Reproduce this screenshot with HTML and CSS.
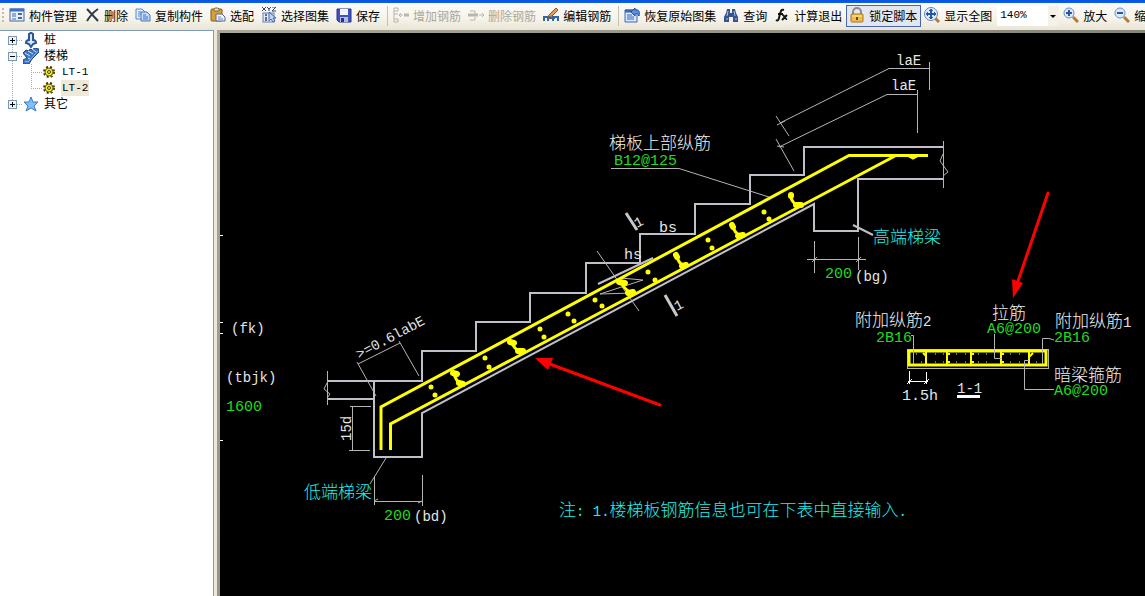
FILE: index.html
```
<!DOCTYPE html>
<html lang="zh-CN">
<head>
  <meta charset="UTF-8" />
  <meta name="viewport" content="width=device-width, initial-scale=1.0"/>
  <title>楼梯 LT-2</title>
  <link rel="stylesheet" href="styles.css">
</head>
<body>
  <div class="title-strip"></div>

  <div class="toolbar" role="toolbar">
    <span class="grip"></span>
    <button class="tool">
      <svg class="icon" viewBox="0 0 16 16"><rect x="1" y="2" width="14" height="12" fill="#e8f0fc" stroke="#47679e"/><path d="M1 3h14" stroke="#3f6fc4" stroke-width="3"/><path d="M3 7h4M3 9h4M3 12h4" stroke="#47679e"/><rect x="9" y="6" width="4" height="2" fill="#47679e"/><rect x="9" y="10" width="4" height="2" fill="#47679e"/></svg>
      构件管理
    </button>
    <button class="tool">
      <svg class="icon" viewBox="0 0 16 16"><path d="M3 2l11 12" stroke="#333a4c" stroke-width="2"/><path d="M14 2Q8 6 3 14" stroke="#333a4c" stroke-width="2" fill="none"/></svg>
      删除
    </button>
    <button class="tool">
      <svg class="icon" viewBox="0 0 16 16"><path d="M1 2h6l3 3v7H1z" fill="#dfebff" stroke="#5f87c5"/><path d="M3 5h3M3 7h4M3 9h2" stroke="#5f87c5"/><path d="M6 5h6l3 3v6H6z" fill="#c5dafa" stroke="#4775bc"/><path d="M8 8h3M8 10h5M8 12h5" stroke="#4775bc"/></svg>
      复制构件
    </button>
    <button class="tool">
      <svg class="icon" viewBox="0 0 16 16"><rect x="1" y="2" width="11" height="12" rx="1" fill="#d9a035" stroke="#7d5c1c"/><path d="M4 4V2l1-1h3l1 1v2z" fill="#eee4b9" stroke="#7d6a3c"/><path d="M6 7h6l3 3v4H6z" fill="#eef4ff" stroke="#5d6980"/><path d="M8 10h3M8 12h5" stroke="#6b88b8"/></svg>
      选配
    </button>
    <button class="tool">
      <svg class="icon" viewBox="0 0 16 16"><path d="M1 0l4 4M5 0L1 4M6 0l2 2 2-2M8 2v2M11 0h4l-4 4h4" stroke="#3b4560" fill="none"/><rect x="2" y="6" width="11" height="9" fill="#e2e9f7" stroke="#6b7fa8"/><path d="M4 8h2M8 8h3M4 11h2M4 13h2" stroke="#526fa8" stroke-width="2"/><path d="M8 5v9l2-2 2 3 2-1-2-3h3z" fill="#bcd4f5" stroke="#4869a3"/></svg>
      选择图集
    </button>
    <button class="tool">
      <svg class="icon" viewBox="0 0 16 16"><path d="M1 2h14v13H3l-2-2z" fill="#4450bb" stroke="#28338c"/><rect x="4" y="2" width="8" height="6" fill="#eef3ff"/><rect x="4" y="10" width="8" height="5" fill="#b4bdd5"/><rect x="5" y="11" width="3" height="4" fill="#28338c"/></svg>
      保存
    </button>
    <span class="separator"></span>
    <button class="tool" disabled>
      <svg class="icon" viewBox="0 0 16 16" fill="none" stroke="#b9b6aa"><path d="M1 1h4v3H1M1 7h4M1 12h4v3H1M1 1v14M6 8h4M8 6L6 8l2 2"/><path d="M11 8h5" stroke-width="3"/></svg>
      增加钢筋
    </button>
    <button class="tool" disabled>
      <svg class="icon" viewBox="0 0 16 16" fill="none" stroke="#b9b6aa"><path d="M2 4h5v3M2 13h5v-3M11 8h5M14 6l2 2-2 2"/><path d="M0 8h10" stroke-width="3"/></svg>
      删除钢筋
    </button>
    <button class="tool">
      <svg class="icon" viewBox="0 0 16 16" fill="none"><path d="M1 14v-4h4v4M4 11h8M10 14v-4h5v4" stroke="#3466a6" stroke-width="2"/><path d="M6 8l7-7 2 2-6 6-4 1z" fill="#e2a05a" stroke="#8b542c"/></svg>
      编辑钢筋
    </button>
    <span class="separator"></span>
    <button class="tool">
      <svg class="icon" viewBox="0 0 16 16"><path d="M1 3h12v12H1z" fill="#d8e7ff" stroke="#3a68b5"/><path d="M1 4h8" stroke="#3a68b5" stroke-width="3"/><path d="M3 8h5M3 10h7M3 12h7" stroke="#3a68b5"/><path d="M7 5l4-4v2c4-1 5 2 4 6-1-2-2-3-4-2v2z" fill="#5b91e4" stroke="#234d9a"/></svg>
      恢复原始图集
    </button>
    <button class="tool">
      <svg class="icon" viewBox="0 0 16 16"><path d="M4 2h3v4h2V2h3l1 4 2 4v5h-5v-5H6v5H1v-5l2-4z" fill="#34558d"/><path d="M5 4L4 9M11 4l1 5M3 12h2M12 12h2" stroke="#a9c8f5"/></svg>
      查询
    </button>
    <button class="tool">
      <svg class="icon" viewBox="0 0 16 16" fill="none" stroke="#111"><path d="M2 13c3 2 3-3 4-6s1-5 4-4M4 7h5" stroke-width="2"/><path d="M8 8c3-1 2 5 5 4M13 8l-5 5" stroke-width="2"/></svg>
      计算退出
    </button>
    <button class="tool pressed" aria-pressed="true">
      <svg class="icon" viewBox="0 0 16 16"><path d="M4 8V5a4 4 0 0 1 8 0v3" fill="none" stroke="#8b8b8b" stroke-width="2"/><rect x="2" y="7" width="12" height="8" rx="1" fill="#f0bd48" stroke="#a87420"/><path d="M3 9h10" stroke="#ffe7a0"/><path d="M8 10v3" stroke="#634413" stroke-width="2"/></svg>
      锁定脚本
    </button>
    <button class="tool">
      <svg class="icon" viewBox="0 0 16 16"><path d="M11 11l4 4" stroke="#b5793a" stroke-width="3"/><circle cx="7" cy="7" r="6.500" fill="#e0eeff" stroke="#6387bb"/><path d="M7 2v10M2 7h10" stroke="#2759a8" stroke-width="2"/><path d="M5 4l2-2 2 2M5 10l2 2 2-2M4 5L2 7l2 2M10 5l2 2-2 2" fill="none" stroke="#2759a8"/></svg>
      显示全图
    </button>
    <span class="zoom-box">
      <select class="zoom-select" aria-label="显示比例"><option>140%</option><option>100%</option></select>
    </span>
    <button class="tool">
      <svg class="icon" viewBox="0 0 16 16"><path d="M10 10l5 5" stroke="#b5793a" stroke-width="3"/><circle cx="6" cy="6" r="5" fill="#dcecff" stroke="#6f91bf"/><path d="M6 3v6M3 6h6" stroke="#2759a8" stroke-width="2"/></svg>
      放大
    </button>
    <button class="tool">
      <svg class="icon" viewBox="0 0 16 16"><path d="M10 10l5 5" stroke="#b5793a" stroke-width="3"/><circle cx="6" cy="6" r="5" fill="#dcecff" stroke="#6f91bf"/><path d="M3 6h6" stroke="#2759a8" stroke-width="2"/></svg>
      缩小
    </button>
  </div>

  <div class="workspace">
    <nav class="sidebar">
      <ul class="tree">
        <li>
          <div class="node">
            <button class="toggle" aria-label="展开"><svg viewBox="0 0 9 9"><path d="M2 4.5h5M4.5 2v5" stroke="#000"/></svg></button>
            <span class="stub"></span>
            <svg class="icon" viewBox="0 0 16 16"><path d="M6 2q2-2 4 0v6q3 0 3 3l-3 1-2 3-2-3-3-1q0-3 3-3z" fill="#d5e6ff" stroke="#2c5793" stroke-width="2"/></svg>
            <span class="name">桩</span>
          </div>
        </li>
        <li>
          <div class="node">
            <button class="toggle" aria-label="折叠"><svg viewBox="0 0 9 9"><path d="M2 4.5h5" stroke="#000"/></svg></button>
            <span class="stub"></span>
            <svg class="icon" viewBox="0 0 16 16"><path d="M0 5l3-3 3 1 1-2 3 1 1-2 5 1v3l-7 7-3 5H0v-4l4-2z" fill="#3f75c4" stroke="#214886"/><path d="M2 5l5 3M5 3l5 3M9 1l4 3M5 10l2 1" stroke="#cfe3ff"/><path d="M2 13l3 1L15 3" fill="none" stroke="#8db8f5"/></svg>
            <span class="name">楼梯</span>
          </div>
          <ul class="children">
            <li class="node">
              <span class="stub"></span>
              <svg class="gear" viewBox="0 0 12 12"><circle cx="6" cy="6" r="5" fill="none" stroke="#484000" stroke-width="2" stroke-dasharray="2 2"/><circle cx="6" cy="6" r="4" fill="#f5e73a" stroke="#6a6000"/><circle cx="6" cy="6" r="1.500" fill="#fff35a" stroke="#484000"/></svg>
              <span class="name latin">LT-1</span>
            </li>
            <li class="node">
              <span class="stub"></span>
              <svg class="gear" viewBox="0 0 12 12"><circle cx="6" cy="6" r="5" fill="none" stroke="#484000" stroke-width="2" stroke-dasharray="2 2"/><circle cx="6" cy="6" r="4" fill="#f5e73a" stroke="#6a6000"/><circle cx="6" cy="6" r="1.500" fill="#fff35a" stroke="#484000"/></svg>
              <span class="name latin selected">LT-2</span>
            </li>
          </ul>
        </li>
        <li>
          <div class="node">
            <button class="toggle" aria-label="展开"><svg viewBox="0 0 9 9"><path d="M2 4.5h5M4.5 2v5" stroke="#000"/></svg></button>
            <span class="stub"></span>
            <svg class="icon" viewBox="0 0 16 16"><path d="M8 1l2 5h5l-4 4 2 5-5-3-5 3 2-5-4-4h5z" fill="#7fc0f7" stroke="#3a77c8"/></svg>
            <span class="name">其它</span>
          </div>
        </li>
      </ul>
    </nav>

    <main class="canvas">
      <svg class="drawing" viewBox="220 33 925 563" preserveAspectRatio="xMinYMin meet">
        <!-- concrete outline -->
        <g class="outline">
          <path d="M943 147H804V175H750V204H695V234H640V263H586V293H530V322H476V351H422V381H327"/>
          <path d="M327 399H374M374 381V457H422V413L814 204V231H858V179H943"/>
          <path d="M598 284L653 258"/>
          <path d="M853 225L873 235"/>
        </g>

        <!-- dimension and leader lines -->
        <g class="thin">
          <path d="M327.5 371V405M327 383L324 389L330 394L327 398"/>
          <path d="M943.5 141V188M943 154L940 161L948 172L943 176"/>
          <path d="M780 123L889 68.5H929M929.5 62V90M776 116L789 136M777 125L785 121"/>
          <path d="M779 147L887 94.5H918M917.5 90V133M776 139L794 171M777 146L784 147"/>
          <path d="M611 168.5H679L772 198"/>
          <path d="M597 251L639 311M620 278L643 280L600 294L632 293"/>
          <path d="M807 259.5H866M814.5 241V273M858.5 237V270M812 262L817 257M856 262L861 257"/>
          <path d="M374 501.5H422M374.5 476V505M422.5 475V506M374 501l4-2M422 501l-4 2"/>
          <path d="M386 458L370 484"/>
          <path d="M352.5 406V450M350 406.5H371M349 450.5H370"/>
          <path d="M358 364L400 343M357 362L376 396M399 341L419 376"/>
        </g>
        <path class="edge-mark" d="M220 235.5h3M220 322.5h3M220 333.5h3M220 440.5h3"/>
        <path class="cut" d="M626 213L637 230M665 295L677 316"/>

        <!-- rebar -->
        <g class="rebar">
          <path d="M381 450V407L849 155.5H928"/>
          <path d="M390.5 450V424L895 156M909 156l4 2 4-2"/>
        </g>
        <g class="rebar">
          <path d="M454 373q1 8 9 12M511 341q2 8 12 12M621 281q2 8 12 13M677 255q0 8 9 12M733 225q0 8 10 12M791 196q0 8 10 10"/>
        </g>
        <g class="knot">
          <path d="M453 373l4 1M510 342l4 1M619 282l6 1M676 255l1 2M732 225l1 2M791 195v1"/>
          <path d="M459 383l4 1M518 351l5 0M628 293l5-1M682 266l4-1M738 236l5-1M796 205l5 0"/>
        </g>
        <path class="dots" d="M431 387h0M435 395h0M485 358h0M489 367h0M540 329h0M544 337h0M568 314h0M574 321h0M595 300h0M602 306h0M648 272h0M655 280h0M708 240h0M712 248h0M764 212h0M769 219h0"/>

        <!-- section 1-1 -->
        <rect class="thin" x="907.5" y="349.5" width="141" height="19"/>
        <rect class="section" x="909" y="351" width="137" height="14"/>
        <path class="section-bar" d="M926 351v14M947 351v14M971 351v14M1001 351v14M1029 351v14M923 353l3 3M946 354h4M946 362h4M970 354h4M970 362h4M1000 354h4M1000 362h4M1029 357l4-4"/>
        <path class="points" d="M916 354h1M921 362h1M935 354h1M935 362h1M943 354h1M943 362h1M956 354h1M956 362h1M965 354h1M965 362h1M978 354h1M978 362h1M986 354h1M986 362h1M1010 354h1M1010 362h1M1019 354h1M1019 362h1M1036 362h1"/>
        <path class="thin" d="M911 335.5h2.5V364M994.5 334V358.5H1002M1042.5 364V338.5H1049L1054 340M1029 360.5H1024.5V389.5H1054"/>
        <path class="edge-mark" d="M909.5 371V384M926.5 372V384M908 381.5H928M907 384l5-5M924 384l5-5"/>
        <path class="underline" d="M957 396.5h23"/>

        <!-- annotation arrows -->
        <path class="arrow" d="M660 405L547 363M1048 193L1017 284"/>
        <path class="arrow-head" d="M535 358l18 0-5 12zM1013 298l-1-19 11 4z"/>

        <g class="cjk">
          <text x="609" y="149">梯板上部纵筋</text>
          <text x="855" y="326">附加纵筋<tspan class="small">2</tspan></text>
          <text x="992" y="319">拉筋</text>
          <text x="1055" y="327">附加纵筋<tspan class="small">1</tspan></text>
          <text x="1054" y="381">暗梁箍筋</text>
          <text class="cyan" x="873" y="243">高端梯梁</text>
          <text class="cyan" x="304" y="498">低端梯梁</text>
          <text class="cyan" x="559" y="516">注<tspan class="small">: 1.</tspan>楼梯板钢筋信息也可在下表中直接输入<tspan class="small">.</tspan></text>
        </g>

        <g class="small">
          <text x="896" y="65">laE</text>
          <text x="891" y="90">laE</text>
          <text x="231" y="333">(fk)</text>
          <text x="226" y="382">(tbjk)</text>
          <text x="855" y="281">(bg)</text>
          <text x="414" y="521">(bd)</text>
          <text x="957" y="393">1-1</text>
          <text transform="translate(359 359) rotate(-28)">&gt;=0.6labE</text>
          <text transform="translate(351 441) rotate(-90)">15d</text>
          <text transform="translate(637 228) rotate(-28)">1</text>
          <text transform="translate(677 311) rotate(-28)">1</text>
        </g>

        <g class="value">
          <text class="label" x="659" y="232">bs</text>
          <text class="label" x="624" y="259">hs</text>
          <text class="label" x="902" y="400">1.5h</text>
          <text x="614" y="165">B12@125</text>
          <text x="825" y="278">200</text>
          <text x="384" y="520">200</text>
          <text x="226" y="411">1600</text>
          <text x="876" y="342">2B16</text>
          <text x="987" y="333">A6@200</text>
          <text x="1054" y="342">2B16</text>
          <text x="1054" y="395">A6@200</text>
        </g>
      </svg>
    </main>
  </div>
</body>
</html>
```
FILE: styles.css
```
* {
  box-sizing: border-box;
}
body {
  margin: 0;
  height: 100vh;
  display: flex;
  flex-direction: column;
  overflow: hidden;
  background-color: #ece9d8;
  color: #000;
  font-family: "Liberation Sans", "Noto Sans CJK SC", sans-serif;
  font-size: 12px;
}
.title-strip {
  height: 3px;
  flex: none;
  background: linear-gradient(#0a52e0, #0a5ff0);
}

/* toolbar */
.toolbar {
  display: flex;
  align-items: center;
  flex: none;
  height: 27px;
  padding-bottom: 1px;
  overflow: hidden;
  background: linear-gradient(#fdfcfa, #f5f3ea 60%, #e9e5d5);
}
.grip {
  flex: none;
  width: 2px;
  height: 16px;
  margin: 0 2px;
  background: repeating-linear-gradient(#c1bda9 0 2px, transparent 2px 4px);
}
.tool {
  display: flex;
  align-items: center;
  gap: 4px;
  flex: none;
  height: 22px;
  padding: 0 3px 2px 2px;
  border: 1px solid transparent;
  background: none;
  color: #000;
  font: inherit;
  white-space: nowrap;
}
.tool:disabled {
  color: #aca899;
}
.pressed {
  border-color: #4567b5;
  background-color: #e2e6ef;
}
.icon {
  flex: none;
  width: 16px;
  height: 16px;
}
.separator {
  flex: none;
  width: 1px;
  height: 20px;
  margin: 0 2px 0 3px;
  background-color: #c5c2b2;
}
.zoom-box {
  position: relative;
  flex: none;
  margin: 0 1px;
}
.zoom-select {
  display: block;
  width: 62px;
  height: 20px;
  padding: 0 3px 2px;
  border: none;
  border-right: 11px solid #f3f1e8;
  border-radius: 0;
  appearance: none;
  background-color: #fff;
  color: #000;
  font: 11px "Liberation Mono", monospace;
}
.zoom-box::after {
  content: "";
  position: absolute;
  right: 3px;
  top: 9px;
  border: 3px solid transparent;
  border-top-color: #000;
  pointer-events: none;
}

/* component tree */
.workspace {
  display: flex;
  flex: 1;
  min-height: 0;
}
.sidebar {
  flex: none;
  width: 214px;
  border-top: 1px solid #7f9db9;
  border-right: 1px solid #7f9db9;
  background-color: #fff;
}
.tree, .children {
  margin: 0;
  padding: 0;
  list-style: none;
}
.tree {
  padding: 1px 8px;
  background: repeating-linear-gradient(#aaa 0 1px, transparent 1px 2px) 12px 10px / 1px 62px no-repeat;
}
.node {
  display: flex;
  align-items: center;
  height: 16px;
}
.toggle {
  flex: none;
  width: 9px;
  height: 9px;
  padding: 0;
  border: none;
  outline: 1px solid #7898b5;
  outline-offset: -1px;
  background-color: #f4f2ea;
}
.toggle svg {
  display: block;
}
.stub {
  flex: none;
  width: 6px;
  height: 1px;
  background: repeating-linear-gradient(90deg, #aaa 0 1px, transparent 1px 2px);
}
.name {
  margin-left: 3px;
  padding: 0 2px;
  line-height: 16px;
}
.children {
  padding-left: 23px;
  background: repeating-linear-gradient(#aaa 0 1px, transparent 1px 2px) 23px 0 / 1px 25px no-repeat;
}
.children .stub {
  width: 12px;
}
.gear {
  flex: none;
  width: 12px;
  height: 12px;
}
.latin {
  margin-left: 6px;
  padding: 0 1px;
  font-family: "Liberation Mono", monospace;
  font-size: 11px;
}
.selected {
  background-color: #ece9d8;
}

/* drawing area */
.canvas {
  flex: 1;
  min-width: 0;
  margin-left: 3px;
  border-top: 3px solid #8b887a;
  border-left: 3px solid #8b887a;
  border-image: linear-gradient(135deg, #aca899, #716f64) 1;
  background-color: #000;
}
.drawing {
  display: block;
  width: 100%;
  height: 100%;
}
.drawing path, .drawing rect {
  fill: none;
}
.outline {
  stroke: #c0c0c8;
  stroke-width: 2;
}
.thin {
  stroke: #b4b4b4;
  stroke-width: 1;
}
.edge-mark {
  stroke: #fff;
}
.cut {
  stroke: #c8c8c8;
  stroke-width: 3;
}
.underline {
  stroke: #fff;
  stroke-width: 3;
}
.rebar {
  stroke: #ff0;
  stroke-width: 3;
}
.knot {
  stroke: #ff0;
  stroke-width: 6;
  stroke-linecap: round;
}
.dots {
  stroke: #ff0;
  stroke-width: 5;
  stroke-linecap: round;
}
.section {
  stroke: #ff0;
  stroke-width: 3;
}
.section-bar {
  stroke: #ff0;
  stroke-width: 2;
}
.points {
  stroke: #eee;
}
.arrow {
  stroke: #f00;
  stroke-width: 3;
  stroke-linecap: round;
}
.drawing .arrow-head {
  fill: #f00;
}
.cjk {
  fill: #f0f0f0;
  font-family: "Noto Sans CJK SC", sans-serif;
  font-size: 17px;
  font-weight: 300;
}
.small {
  fill: #e6e6e6;
  font-family: "Liberation Mono", monospace;
  font-size: 14px;
}
.value {
  fill: #1fdc1f;
  font-family: "Liberation Mono", monospace;
  font-size: 15px;
}
.value .label {
  fill: #e6e6e6;
}
.cyan, .cyan .small {
  fill: #1ff0ec;
}
```
